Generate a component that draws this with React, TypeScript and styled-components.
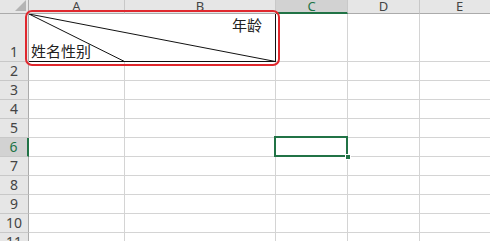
import React from 'react';
import styled, { createGlobalStyle } from 'styled-components';

const GlobalStyle = createGlobalStyle`
  html, body {
    margin: 0;
    padding: 0;
    background: #ffffff;
  }
  * {
    box-sizing: border-box;
  }
`;

const green = '#217346';

const columns = ['A', 'B', 'C', 'D', 'E'];
const rows = [2, 3, 4, 5, 6, 7, 8, 9, 10, 11];
const selectedCol = 'C';
const selectedRow = 6;

function App() {
  return (
    <>
      <GlobalStyle />
      <Sheet>
        <Grid>
          <Corner>
            <CornerTriangle />
          </Corner>
          {columns.map((c) => (
            <ColHeader key={c} $active={c === selectedCol}>
              {c}
            </ColHeader>
          ))}

          <RowHeader>1</RowHeader>
          <DiagonalCell>
            <svg width="247" height="48" viewBox="0 0 247 48">
              <line x1="0" y1="0" x2="246.5" y2="47.5" stroke="#111" strokeWidth="1" />
              <line x1="0" y1="0" x2="95.5" y2="47.5" stroke="#111" strokeWidth="1" />
            </svg>
            <TopLabel>年龄</TopLabel>
            <BottomLabel>姓名性别</BottomLabel>
          </DiagonalCell>
          <Cell />
          <Cell />
          <Cell />

          {rows.map((r) => (
            <React.Fragment key={r}>
              <RowHeader $active={r === selectedRow}>{r}</RowHeader>
              {columns.map((c) => (
                <Cell key={c} $selected={r === selectedRow && c === selectedCol}>
                  {r === selectedRow && c === selectedCol && <FillHandle />}
                </Cell>
              ))}
            </React.Fragment>
          ))}
        </Grid>
        <Highlight />
      </Sheet>
    </>
  );
}

const Sheet = styled.div`
  position: relative;
  width: 490px;
  height: 241px;
  overflow: hidden;
  background: #ffffff;
  font-family: 'Noto Sans', 'Noto Sans CJK SC', sans-serif;
`;

const Grid = styled.div`
  display: grid;
  grid-template-columns: 29px 96px 151px 72px 72px 80px;
  grid-template-rows: 14px 48px repeat(10, 19px);
`;

const Corner = styled.div`
  position: relative;
  background: #e6e6e6;
  border-right: 1px solid #ababab;
  border-bottom: 1px solid #ababab;
`;

const CornerTriangle = styled.div`
  position: absolute;
  right: 2px;
  bottom: 2px;
  width: 0;
  height: 0;
  border-left: 11px solid transparent;
  border-bottom: 11px solid #b4b4b4;
`;

const ColHeader = styled.div<{ $active?: boolean }>`
  display: flex;
  align-items: center;
  justify-content: center;
  background: ${(p) => (p.$active ? '#d2d2d2' : '#e6e6e6')};
  color: ${(p) => (p.$active ? green : '#444444')};
  border-right: 1px solid #c8c8c8;
  border-bottom: ${(p) => (p.$active ? `2px solid ${green}` : '1px solid #ababab')};
  font-size: 13px;
  line-height: 13px;
`;

const RowHeader = styled.div<{ $active?: boolean }>`
  display: flex;
  align-items: flex-end;
  justify-content: center;
  padding-bottom: 1px;
  background: ${(p) => (p.$active ? '#d2d2d2' : '#e6e6e6')};
  color: ${(p) => (p.$active ? green : '#444444')};
  border-right: ${(p) => (p.$active ? `2px solid ${green}` : '1px solid #ababab')};
  border-bottom: 1px solid #c8c8c8;
  font-size: 14px;
  line-height: 17px;
`;

const Cell = styled.div<{ $selected?: boolean }>`
  position: relative;
  border-right: 1px solid #d4d4d4;
  border-bottom: 1px solid #d4d4d4;

  ${(p) =>
    p.$selected &&
    `
    &::after {
      content: '';
      position: absolute;
      left: -2px;
      top: -2px;
      right: -1px;
      bottom: -1px;
      border: 2px solid ${green};
      z-index: 2;
    }
  `}
`;

const FillHandle = styled.div`
  position: absolute;
  right: -4px;
  bottom: -4px;
  width: 6px;
  height: 6px;
  background: ${green};
  border: 1px solid #ffffff;
  z-index: 3;
`;

const DiagonalCell = styled.div`
  position: relative;
  grid-column: span 2;
  border-right: 1px solid #111111;
  border-bottom: 1px solid #111111;
  font-family: 'Noto Sans CJK SC', sans-serif;

  svg {
    position: absolute;
    left: 0;
    top: 0;
  }
`;

const TopLabel = styled.div`
  position: absolute;
  right: 13px;
  top: 1px;
  font-size: 15px;
  line-height: 20px;
  color: #222222;
`;

const BottomLabel = styled.div`
  position: absolute;
  left: 2px;
  bottom: 0px;
  font-size: 15px;
  line-height: 20px;
  color: #222222;
`;

const Highlight = styled.div`
  position: absolute;
  left: 25px;
  top: 10px;
  width: 255px;
  height: 56px;
  border: 2px solid #e0282e;
  border-radius: 7px;
  pointer-events: none;
`;

export default App;
